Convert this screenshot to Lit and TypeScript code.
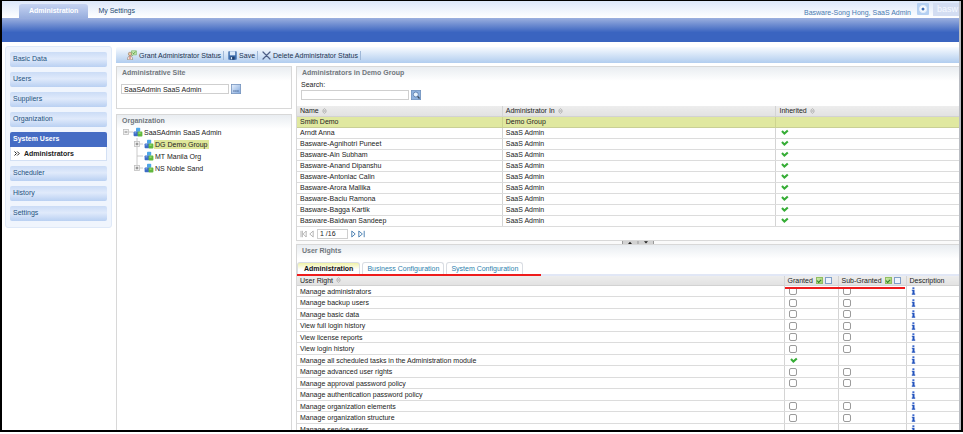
import { LitElement, html, css, svg, nothing } from "lit";
import { customElement, property } from "lit/decorators.js";
import { classMap } from "lit/directives/class-map.js";

const tick = html`<svg class="tick" width="8" height="7" viewBox="0 0 8 7" role="img" aria-label="Yes">
  <path d="M1 2 L3.4 4.6 L6.8 1.4" fill="none" stroke="#36ad36" stroke-width="2.1" />
</svg>`;

const sorter = html`<svg class="sorter" width="5" height="6" viewBox="0 0 5 6" aria-hidden="true">
  <path d="M0.6 2.3 L2.5 0.5 L4.4 2.3 Z M0.6 3.7 L2.5 5.5 L4.4 3.7 Z" fill="#e8e8e8" stroke="#a2a2a2" stroke-width="0.6" />
</svg>`;

const info = html`<svg class="info" width="5" height="8" viewBox="0 0 5 8" role="img" aria-label="Info">
  <rect x="1.4" y="0.3" width="2" height="1.7" fill="#3d68cc" />
  <path d="M0.8 2.8 H3.5 V6.6 H4.2 V7.7 H0.8 V6.6 H1.5 V3.7 H0.8 Z" fill="#2454bd" />
</svg>`;

const cubes = svg`
  <rect x="2.6" y="0.2" width="4.2" height="4" rx="0.8" fill="#4fa6e6" />
  <rect x="0.2" y="3.8" width="4.8" height="4.8" rx="0.8" fill="#3d6cc6" />
  <rect x="4.2" y="4" width="4.8" height="5" rx="0.8" fill="#62b83e" />
  <rect x="5" y="4.6" width="2.2" height="1.8" rx="0.5" fill="#8ed668" />
  <rect x="1" y="4.4" width="2" height="1.6" rx="0.5" fill="#6d98e2" />`;

interface TreeNode {
  name: string;
  sign?: string;
  root?: boolean;
  last?: boolean;
  selected?: boolean;
}

@customElement("side-menu")
export class SideMenu extends LitElement {
  static styles = css`
    :host { display: block; width: 107px; flex: none; box-sizing: border-box; }
    .menu {
      padding: 5px 4px 6px; display: flex; flex-direction: column; gap: 5px;
      background: #f0f5fd; border: 1px solid #dfe9f8; border-radius: 3px; box-sizing: border-box;
    }
    .item {
      display: block; height: 15px; line-height: 14px; padding: 0 3px; border-radius: 2px;
      color: #24527e; text-decoration: none;
      background: linear-gradient(#cbdcf6, #e0eafb 45%, #b9d0f2);
    }
    .item.open {
      color: #fff; font-weight: bold; background: #456cc4; border-radius: 2px 2px 0 0;
    }
    .sub {
      display: flex; align-items: center; gap: 4px; height: 14px; box-sizing: border-box;
      padding: 0 3px; background: #fff; border: 1px solid #d3e0f4; border-top: 0;
      color: #222; font-weight: bold; text-decoration: none;
    }
  `;

  render() {
    const items = ["Basic Data", "Users", "Suppliers", "Organization", "System Users", "Scheduler", "History", "Settings"];
    return html`<nav class="menu">
      ${items.map((name) => {
        const open = name === "System Users";
        return html`<div>
          <a href="#" class=${classMap({ item: true, open })}>${name}</a>
          ${open
            ? html`<a href="#" class="sub">
                <svg width="6" height="5" viewBox="0 0 6 5" aria-hidden="true">
                  <path d="M0.5 0.5 L2.5 2.5 L0.5 4.5 M3.2 0.5 L5.2 2.5 L3.2 4.5" fill="none" stroke="#222" stroke-width="1" />
                </svg>Administrators</a>`
            : nothing}
        </div>`;
      })}
    </nav>`;
  }
}

@customElement("org-tree")
export class OrgTree extends LitElement {
  static styles = css`
    :host { display: block; }
    .tree { list-style: none; margin: 0; padding: 0 6px; }
    .node { display: flex; align-items: center; height: 12px; padding-left: 11px; white-space: nowrap; }
    .node.root { padding-left: 0; }
    .icon { flex: none; }
    .name { padding: 0 1px; line-height: 9px; }
    .selected .name { background: #dfe79a; }
  `;

  nodes: TreeNode[] = [
    { name: "SaaSAdmin SaaS Admin", sign: "-", root: true },
    { name: "DG Demo Group", sign: "+", selected: true },
    { name: "MT Manila Org" },
    { name: "NS Noble Sand", sign: "+", last: true },
  ];

  render() {
    return html`<ul class="tree">
      ${this.nodes.map(
        (n) => html`<li class=${classMap({ node: true, root: !!n.root, selected: !!n.selected })}>
          <svg class="icon" width="20" height="12" viewBox="0 0 20 12" aria-hidden="true">
            <path d=${n.root ? "M6 6 H10" : "M3 0 V6 H9"} fill="none" stroke="#bdbdbd" stroke-width="0.8" />
            ${n.last || n.root ? nothing : svg`<path d="M3 6 V12" stroke="#bdbdbd" stroke-width="0.8" />`}
            ${n.sign
              ? svg`<rect x="0.5" y="3.5" width="5" height="5" fill="#f2f2f2" stroke="#c0c0c0" stroke-width="0.8" />
                  <path d=${n.sign === "+" ? "M1.6 6 H4.4 M3 4.6 V7.4" : "M1.6 6 H4.4"} stroke="#666" stroke-width="0.8" />`
              : nothing}
            <g transform="translate(10.4 1.6)">${cubes}</g>
          </svg>
          <span class="name">${n.name}</span>
        </li>`
      )}
    </ul>`;
  }
}

const tableStyles = css`
  table { width: 100%; border-collapse: collapse; table-layout: fixed; }
  th, td {
    box-sizing: border-box; height: 11px; padding: 0 3px; line-height: 9px; text-align: left;
    font-weight: normal; white-space: nowrap; border-bottom: 1px solid #dcdcdc;
    border-right: 1px solid #d4d4d4; vertical-align: middle;
  }
  th:last-child, td:last-child { border-right: 0; }
  th { height: 10px; background: linear-gradient(#ededed, #e2e2e2); color: #222; border-bottom-color: #d2d2d2; }
  svg { vertical-align: middle; }
  th .sorter { display: inline-block; margin: -2px 0 -1px 1px; }
`;

@customElement("admin-table")
export class AdminTable extends LitElement {
  static styles = [
    tableStyles,
    css`
      :host { display: block; }
      .name { width: 31%; }
      .inherited { width: 184px; }
      th:last-child, td:last-child { padding-left: 4px; }
      .selected td { background: #e0e8a0; border-bottom-color: #c9cf96; border-right-color: #cdd48f; }
      .tick { margin-left: 1px; display: block; }
    `,
  ];

  names = [
    "Smith Demo", "Arndt Anna", "Basware-Agnihotri Puneet", "Basware-Ain Subham", "Basware-Anand Dipanshu",
    "Basware-Antoniac Calin", "Basware-Arora Mallika", "Basware-Baciu Ramona", "Basware-Bagga Kartik",
    "Basware-Baidwan Sandeep",
  ];

  render() {
    return html`<table>
      <thead><tr>
        <th class="name">Name ${sorter}</th>
        <th>Administrator In ${sorter}</th>
        <th class="inherited">Inherited ${sorter}</th>
      </tr></thead>
      <tbody>
        ${this.names.map(
          (n, i) => html`<tr class=${classMap({ selected: i === 0 })}>
            <td>${n}</td>
            <td>${i === 0 ? "Demo Group" : "SaaS Admin"}</td>
            <td>${i === 0 ? nothing : tick}</td>
          </tr>`
        )}
      </tbody>
    </table>`;
  }
}

@customElement("rights-table")
export class RightsTable extends LitElement {
  static styles = [
    tableStyles,
    css`
      :host { display: block; }
      .granted { width: 54px; position: relative; }
      .sub { width: 68px; }
      .desc { width: 53px; }
      tbody tr:nth-child(even) td { height: 12px; }
      .head { display: flex; align-items: center; height: 9px; }
      .head .all { margin-left: 3px; }
      .head .all + .all { margin-left: 2px; }
      input {
        appearance: none; display: block; box-sizing: border-box; width: 8px; height: 8px; margin: 0 0 0 1px;
        background: #fff; border: 1px solid #9b9b9b; border-radius: 2px;
      }
      .all { width: 7px; height: 7px; border-radius: 0; border-color: #7f9fc8; background: #eef4fc; }
      .all.on {
        border-color: #8fbe62;
        background: linear-gradient(135deg, #cdeaa8, #9ed06c);
        display: grid; place-items: center;
      }
      .all.on::before {
        content: ""; box-sizing: border-box; width: 4px; height: 3px;
        border-left: 1px solid #2d7d22; border-bottom: 1px solid #2d7d22; transform: rotate(-45deg);
      }
      .tick { margin-left: 2px; display: block; }
      .info { display: block; margin-left: 1px; }
      .mark { position: absolute; z-index: 1; left: 0; top: 11px; width: 120px; height: 2px; background: #ee1c1c; }
    `,
  ];

  rights: [string, string][] = [
    ["Manage administrators", "box"], ["Manage backup users", "box"], ["Manage basic data", "box"],
    ["View full login history", "box"], ["View license reports", "box"], ["View login history", "box"],
    ["Manage all scheduled tasks in the Administration module", "tick"], ["Manage advanced user rights", "box"],
    ["Manage approval password policy", "box"], ["Manage authentication password policy", ""],
    ["Manage organization elements", "box"], ["Manage organization structure", "box"], ["Manage service users", ""],
  ];

  head(label: string) {
    return html`<div class="head">${label}
      <input type="checkbox" class="all on" checked aria-label="${label}: select all" />
      <input type="checkbox" class="all" aria-label="${label}: clear all" />
    </div>`;
  }

  render() {
    return html`<table>
      <thead><tr>
        <th>User Right ${sorter}</th>
        <th class="granted">${this.head("Granted")}<span class="mark"></span></th>
        <th class="sub">${this.head("Sub-Granted")}</th>
        <th class="desc">Description</th>
      </tr></thead>
      <tbody>
        ${this.rights.map(
          ([name, state]) => html`<tr>
            <td>${name}</td>
            <td>${state === "box" ? html`<input type="checkbox" aria-label="Grant: ${name}" />` : state ? tick : nothing}</td>
            <td>${state === "box" ? html`<input type="checkbox" aria-label="Sub-grant: ${name}" />` : nothing}</td>
            <td>${info}</td>
          </tr>`
        )}
      </tbody>
    </table>`;
  }
}

@customElement("page-panel")
export class PagePanel extends LitElement {
  @property() heading = "";
  static styles = css`
    :host {
      display: block; box-sizing: border-box; border: 1px solid #d8d8d8; min-width: 0;
      background: linear-gradient(#e9edf1, #fff 14px);
    }
    .heading {
      margin: 0; height: 11px; line-height: 11px; padding: 0 5px; font-size: 7px; font-weight: bold; color: #71777d;
    }
  `;
  render() {
    return html`<h2 class="heading">${this.heading}</h2><slot></slot>`;
  }
}

@customElement("app-root")
export class AppRoot extends LitElement {
  static styles = css`
    :host {
      display: block; box-sizing: border-box; height: 100vh; padding-bottom: 2px; overflow: hidden; background: #fff;
      font: 7px "Liberation Sans", Arial, sans-serif; color: #222;
    }
    .frame {
      display: flex; flex-direction: column; box-sizing: border-box; height: 100%; overflow: hidden;
      border: 2px solid #000; border-top-width: 1px; background: linear-gradient(to left, #b9bcc2 2px, #fff 2px);
      padding-right: 2px;
    }
    .top {
      flex: none; display: flex; align-items: flex-end; height: 17px; padding-left: 17px;
      background: linear-gradient(#dce7fa, #fff);
    }
    .toptab { height: 14px; line-height: 13px; padding: 0 10px; color: #1f4a70; text-decoration: none; }
    .toptab.on {
      color: #fff; font-weight: bold; border-radius: 3px 3px 0 0;
      background: linear-gradient(#c5d3f1, #98aede);
    }
    .user { display: flex; margin-left: auto; height: 15px; gap: 4px; }
    .who { margin-right: 2px; line-height: 19px; color: #4a7ab0; text-decoration: none; }
    .round { border: 0; padding: 0; width: 12px; height: 12px; background: none; }
    .round svg, .small svg { display: block; }
    .brand {
      width: 26px; height: 13px; background: #d3ddf2; color: #f6f9ff;
      font-size: 9px; line-height: 12px; padding-left: 4px; box-sizing: border-box;
    }
    .band { flex: none; height: 24px; background: linear-gradient(#9cb0df, #3a64c0 60%, #3a64c0); }
    .body { flex: 1; min-height: 0; display: flex; gap: 4px; padding: 4px 0 0 3px; }
    .main { flex: 1; min-width: 0; display: flex; flex-direction: column; gap: 3px; padding-top: 1px; }
    .tools {
      flex: none; display: flex; align-items: center; height: 16px; padding-left: 11px;
      background: linear-gradient(#f8fbff, #b1cdef); border-radius: 2px 0 0 0;
    }
    .tool {
      display: flex; align-items: center; gap: 2px; height: 9px; padding: 0 2px 0 0; margin-right: 4px;
      border: 0; border-right: 1px solid #9fb8d8; background: none; color: #1c3350; font: inherit; white-space: nowrap;
    }
    .cols { flex: 1; min-height: 0; display: flex; gap: 4px; }
    .left { flex: none; width: 176px; display: flex; flex-direction: column; gap: 5px; }
    .right { flex: 1; min-width: 0; display: flex; flex-direction: column; }
    .site { height: 43px; }
    .org, .rights { flex: 1; min-height: 0; overflow: hidden; border-bottom: 0; }
    .admins, .rights { border-right: 0; }
    .row { display: flex; gap: 2px; padding: 0 4px; }
    .site .row { padding-top: 6px; }
    .text {
      box-sizing: border-box; width: 108px; height: 10px; padding: 0 2px; border: 1px solid #cfcfcf; margin: 0;
      font: inherit; color: #222; background: #fff;
    }
    .small { width: 10px; height: 10px; padding: 0; border: 0; background: none; }
    .label { display: block; padding: 2px 4px 0; line-height: 10px; }
    .search { height: 10px; padding-bottom: 6px; }
    .pager { display: flex; align-items: center; height: 12px; gap: 2px; padding: 1px 3px 0; }
    .pager .text { width: 31px; height: 10px; margin: 0 1px; }
    .step { border: 0; padding: 0; background: none; display: block; height: 8px; }
    .step svg { display: block; }
    .split { flex: none; display: flex; justify-content: center; height: 3px; padding-left: 20px; background: #fafafa; }
    .grip { width: 32px; height: 3px; background: #d2d2d2; }
    .grip svg { display: block; }
    .tabs { position: relative; display: flex; gap: 2px; margin-top: 6px; border-bottom: 2px solid #e1e7f6; }
    .tab {
      box-sizing: border-box; height: 12px; padding: 0 4px; font: inherit; color: #2d7fae; background: #fff;
      border: 1px solid #d9dde3; border-bottom: 0; border-radius: 3px 3px 0 0;
    }
    .tab.on { padding: 0 6px; color: #111; font-weight: bold; background: linear-gradient(#f0f2a8, #fff 60%); }
    .mark { position: absolute; left: 0; bottom: -2px; width: 244px; height: 2px; background: #ee1c1c; }
  `;

  render() {
    return html`<div class="frame">
      <header class="top">
        <a href="#" class="toptab on">Administration</a>
        <a href="#" class="toptab">My Settings</a>
        <div class="user">
          <a href="#" class="who">Basware-Song Hong, SaaS Admin</a>
          <button class="round" aria-label="Options">
            <svg width="12" height="12" viewBox="0 0 12 12">
              <rect width="12" height="12" rx="1" fill="#b5d0f2" />
              <circle cx="6" cy="6" r="3.4" fill="#fff" stroke="#e4eefb" stroke-width="1.2" />
              <circle cx="6" cy="6" r="1.5" fill="#3c6db8" />
            </svg>
          </button>
          <span class="brand">basw</span>
        </div>
      </header>
      <div class="band"></div>
      <div class="body">
        <side-menu></side-menu>
        <main class="main">
          <div class="tools">
            <button class="tool">
              <svg width="10" height="10" viewBox="0 0 10 10">
                <path d="M4.5 0.8 H9.4 V4.8 H6 L5 6 V4.8 H4.5 Z" fill="#c9e8b4" stroke="#6fae55" stroke-width="0.6" />
                <path d="M5.5 2.6 L6.6 3.8 L8.6 1.6" fill="none" stroke="#3b8d2c" stroke-width="0.8" />
                <circle cx="3" cy="3.9" r="1.7" fill="#e9c9a4" stroke="#8d6a4c" stroke-width="0.5" />
                <path d="M0.5 9.7 C0.5 6.8 1.6 6 3 6 S5.6 6.8 5.6 9.7 Z" fill="#f5efe9" stroke="#8d7a6c" stroke-width="0.6" />
                <path d="M3 6.2 V9" stroke="#d04a3a" stroke-width="0.9" />
              </svg>Grant Administrator Status
            </button>
            <button class="tool">
              <svg width="9" height="9" viewBox="0 0 9 9">
                <rect x="0.3" y="0.3" width="8.4" height="8.4" rx="0.6" fill="#3f6fae" />
                <rect x="1.8" y="0.3" width="5.4" height="4" fill="#dbe9f8" />
                <rect x="2.2" y="5.6" width="4.4" height="3.1" fill="#1f3f6e" />
                <rect x="2.8" y="6.1" width="1.3" height="2.2" fill="#dbe9f8" />
              </svg>Save
            </button>
            <button class="tool">
              <svg width="9" height="9" viewBox="0 0 9 9">
                <path d="M1 1 L8 8 M8 1 L1 8" stroke="#4d5f86" stroke-width="1.2" stroke-linecap="round" />
              </svg>Delete Administrator Status
            </button>
          </div>
          <div class="cols">
            <div class="left">
              <page-panel class="site" heading="Administrative Site">
                <div class="row">
                  <input class="text" aria-label="Administrative Site" .value=${"SaaSAdmin SaaS Admin"} />
                  <button class="small" aria-label="Browse">
                    <svg width="10" height="10" viewBox="0 0 10 10">
                      <defs><linearGradient id="g" x1="0" y1="0" x2="1" y2="1"><stop stop-color="#e9f2fd" /><stop offset="1" stop-color="#7fa6dc" /></linearGradient></defs>
                      <rect x="0.4" y="0.4" width="9.2" height="9.2" fill="url(#g)" stroke="#7593bd" stroke-width="0.8" />
                      <path d="M2.4 7 H3.5 M4.4 7 H5.5 M6.4 7 H7.5" stroke="#1d3d70" stroke-width="1" />
                    </svg>
                  </button>
                </div>
              </page-panel>
              <page-panel class="org" heading="Organization"><org-tree></org-tree></page-panel>
            </div>
            <div class="right">
              <page-panel class="admins" heading="Administrators in Demo Group">
                <label class="label" for="search">Search:</label>
                <div class="row search">
                  <input class="text" id="search" />
                  <button class="small" aria-label="Search">
                    <svg width="10" height="10" viewBox="0 0 10 10">
                      <rect x="0.4" y="0.4" width="9.2" height="9.2" fill="#8fb2de" stroke="#6f90bd" stroke-width="0.8" />
                      <circle cx="4.8" cy="4.5" r="2.5" fill="#eaf4fd" stroke="#4f74a6" stroke-width="0.8" />
                      <path d="M6.6 6.4 L8.5 8.5" stroke="#3a4a5c" stroke-width="1.3" />
                    </svg>
                  </button>
                </div>
                <admin-table></admin-table>
                <div class="pager">
                  <button class="step" aria-label="First page"><svg width="7" height="8" viewBox="0 0 7 8"><path d="M1 0.8 V7.2 M2.4 0.8 V7.2 M6.2 1 L3.2 4 L6.2 7 Z" fill="none" stroke="#a4a4a4" stroke-width="0.8" /></svg></button>
                  <button class="step" aria-label="Previous page"><svg width="5" height="8" viewBox="0 0 5 8"><path d="M4.2 1 L0.8 4 L4.2 7 Z" fill="none" stroke="#a4a4a4" stroke-width="0.8" /></svg></button>
                  <input class="text" aria-label="Page" .value=${"1 /16"} />
                  <button class="step" aria-label="Next page"><svg width="5" height="8" viewBox="0 0 5 8"><path d="M0.8 1 L4.2 4 L0.8 7 Z" fill="none" stroke="#3f78ad" stroke-width="0.9" /></svg></button>
                  <button class="step" aria-label="Last page"><svg width="7" height="8" viewBox="0 0 7 8"><path d="M6.2 0.8 V7.2 M0.8 1 L4.4 4 L0.8 7 Z" fill="none" stroke="#3f78ad" stroke-width="0.9" /></svg></button>
                </div>
              </page-panel>
              <div class="split"><div class="grip">
                <svg width="32" height="3" viewBox="0 0 32 3"><path d="M6 3 L8 0.8 L10 3 Z M22 0.2 H26 L24 2.4 Z" fill="#222" /><path d="M0.5 0 V3 M16 0 V3 M31.5 0 V3" stroke="#999" /></svg>
              </div></div>
              <page-panel class="rights" heading="User Rights">
                <div class="tabs">
                  <button class="tab on">Administration</button>
                  <button class="tab">Business Configuration</button>
                  <button class="tab">System Configuration</button>
                  <span class="mark"></span>
                </div>
                <rights-table></rights-table>
              </page-panel>
            </div>
          </div>
        </main>
      </div>
    </div>`;
  }
}
